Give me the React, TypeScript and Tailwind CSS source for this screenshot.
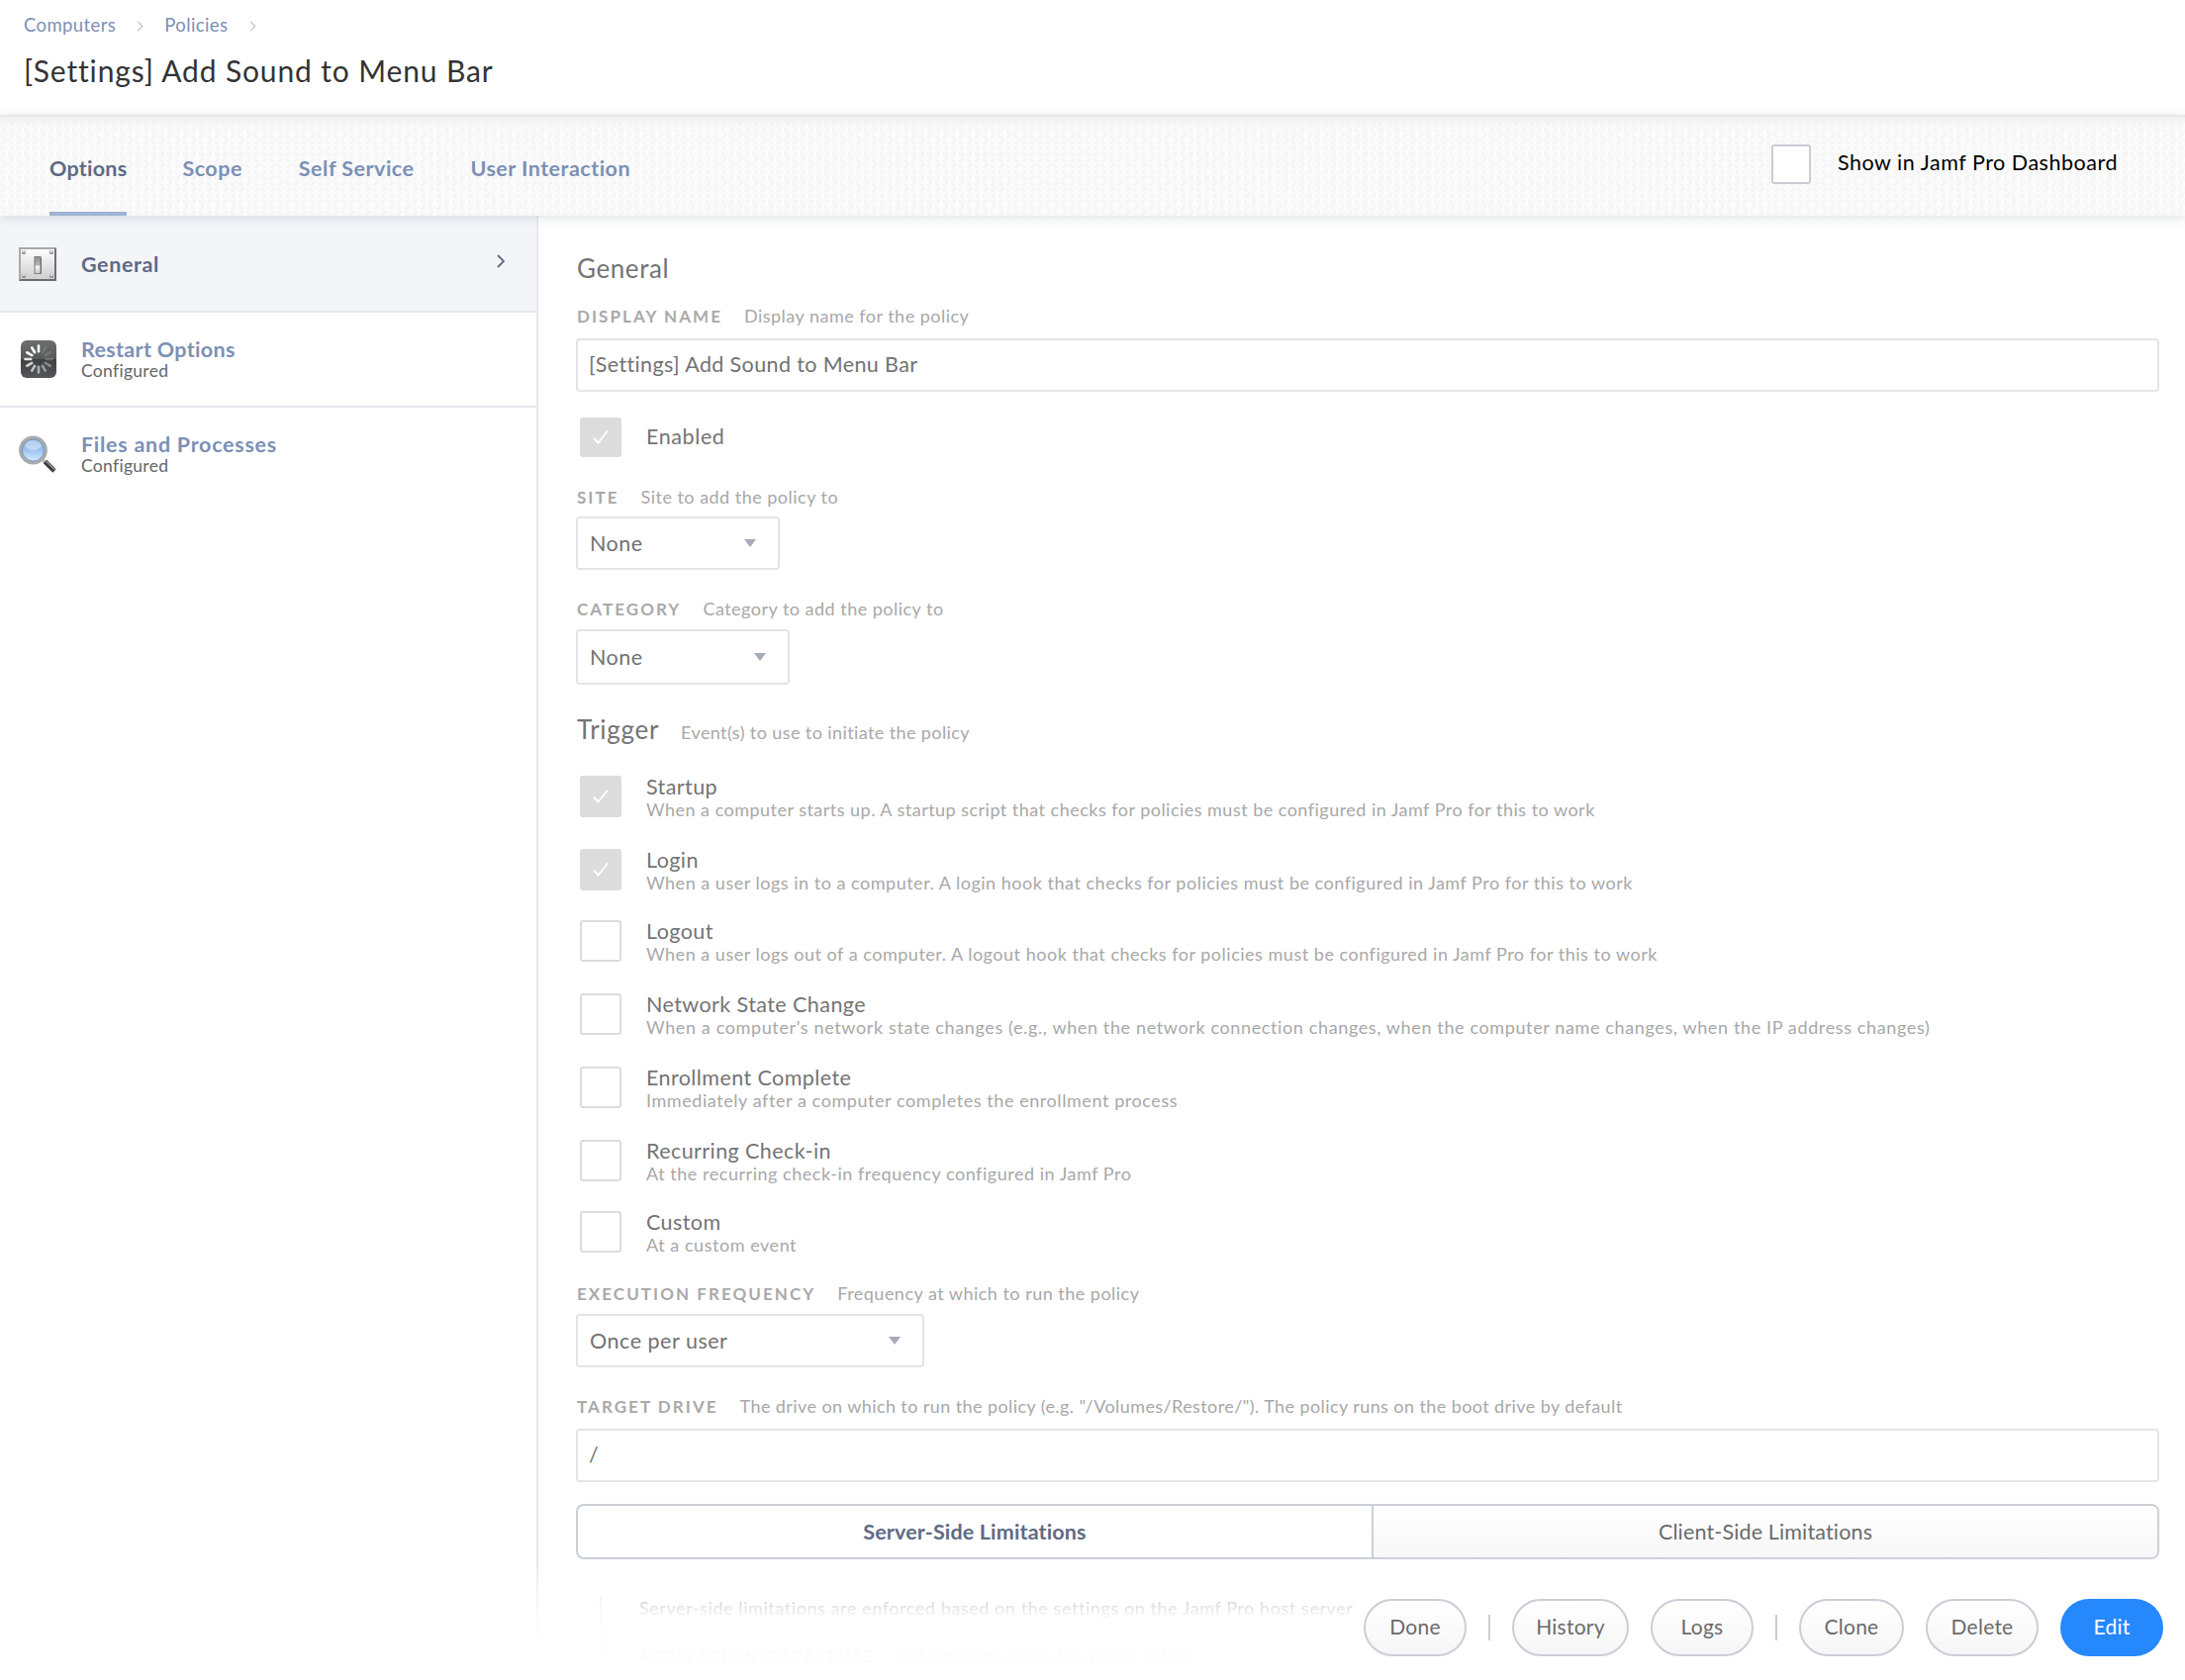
import React from "react";
import clsx from "clsx";

const TABS = ["Scope", "Self Service", "User Interaction"];

const TRIGGERS = [
  {
    name: "Startup",
    note: "When a computer starts up. A startup script that checks for policies must be configured in Jamf Pro for this to work",
    checked: true,
    row: "h-[74px]",
    spacing: "tracking-[0.475px]",
  },
  {
    name: "Login",
    note: "When a user logs in to a computer. A login hook that checks for policies must be configured in Jamf Pro for this to work",
    checked: true,
    row: "h-[72px]",
    spacing: "tracking-[0.51px]",
  },
  {
    name: "Logout",
    note: "When a user logs out of a computer. A logout hook that checks for policies must be configured in Jamf Pro for this to work",
    row: "h-[74px]",
    spacing: "tracking-[0.51px]",
  },
  {
    name: "Network State Change",
    note: "When a computer's network state changes (e.g., when the network connection changes, when the computer name changes, when the IP address changes)",
    row: "h-[74px]",
    spacing: "tracking-[0.625px]",
  },
  {
    name: "Enrollment Complete",
    note: "Immediately after a computer completes the enrollment process",
    row: "h-[74px]",
    spacing: "tracking-[0.57px]",
  },
  {
    name: "Recurring Check-in",
    note: "At the recurring check-in frequency configured in Jamf Pro",
    row: "h-[72px]",
    spacing: "tracking-[0.53px]",
  },
  { name: "Custom", note: "At a custom event", row: "h-[42px]", spacing: "tracking-[0.54px]" },
];

// Spoke opacity, clockwise from twelve o'clock
const SPOKES = [1, 0.12, 0.14, 0.2, 0.35, 0.45, 0.55, 0.65, 0.75, 0.85, 0.95, 1];

const SwitchIcon = () => (
  <svg width="38" height="34" viewBox="0 0 38 34">
    <defs>
      <linearGradient id="plate" x1="0" y1="0" x2="0" y2="1">
        <stop offset="0" stopColor="#fdfdfd" />
        <stop offset="1" stopColor="#cfcfcf" />
      </linearGradient>
      <linearGradient id="lever" x1="0" y1="0" x2="0" y2="1">
        <stop offset="0" stopColor="#8e8e8e" />
        <stop offset="0.5" stopColor="#b5b5b5" />
        <stop offset="0.55" stopColor="#f5f5f5" />
        <stop offset="1" stopColor="#c8c8c8" />
      </linearGradient>
    </defs>
    <rect width="38" height="34" fill="#a9a9a9" />
    <path d="M38 0v34H0l2-2h34V2z" fill="#6e6e6e" />
    <rect x="2" y="2" width="34" height="30" fill="url(#plate)" />
    {[5, 33].map((x) =>
      [5, 29].map((y) => (
        <g key={`${x}-${y}`}>
          <circle cx={x} cy={y} r="1.9" fill="#777" />
          <circle cx={x} cy={y - 0.7} r="1.2" fill="#e2e2e2" />
        </g>
      )),
    )}
    <rect x="16" y="9.5" width="6" height="17" fill="url(#lever)" stroke="#7d7d7d" />
    <path d="M22.5 10.5v16" stroke="#6c6c6c" />
  </svg>
);

const RestartIcon = () => (
  <svg className="ml-0.5" width="36" height="38" viewBox="0 0 36 38">
    <defs>
      <linearGradient id="dark" x1="0" y1="0" x2="0" y2="1">
        <stop offset="0" stopColor="#6c6d6f" />
        <stop offset="0.49" stopColor="#58595b" />
        <stop offset="0.5" stopColor="#3f4042" />
        <stop offset="1" stopColor="#55565a" />
      </linearGradient>
    </defs>
    <rect width="36" height="38" rx="6" fill="url(#dark)" />
    {SPOKES.map((o, i) => (
      <path
        key={i}
        d="M18 11.2V5.5"
        stroke="#fff"
        strokeOpacity={o}
        strokeWidth="2.6"
        strokeLinecap="round"
        transform={`rotate(${i * 30} 18 19)`}
      />
    ))}
  </svg>
);

const MagnifierIcon = () => (
  <svg width="38" height="38" viewBox="0 0 38 38">
    <defs>
      <linearGradient id="glass" x1="0" y1="0" x2="0" y2="1">
        <stop offset="0" stopColor="#7ba6e0" />
        <stop offset="0.5" stopColor="#9cc3f2" />
        <stop offset="1" stopColor="#d9f0fe" />
      </linearGradient>
    </defs>
    <path d="M24 24.5l4 4" stroke="#b5b5b5" strokeWidth="3" />
    <path d="M26.5 26.5l9.5 9.5" stroke="#3f3f3f" strokeWidth="5" />
    <path d="M27.5 26l9 8.8" stroke="#9a9a9a" strokeWidth="1.2" />
    <circle cx="14.5" cy="15" r="12.7" fill="url(#glass)" stroke="#a9abad" strokeWidth="3.4" />
    <circle cx="14.5" cy="15" r="11" fill="none" stroke="#6f8fc0" strokeWidth="0.8" />
    <ellipse cx="14.5" cy="10" rx="8" ry="5" fill="#fff" fillOpacity="0.4" />
  </svg>
);

const Chevron = ({ className }: { className?: string }) => (
  <svg className={className} width="8" height="14" viewBox="0 0 8 14" fill="none">
    <path d="M1 1l6 6-6 6" stroke="currentColor" strokeWidth="1.8" />
  </svg>
);

// Woven texture behind the tab bar
const Weave = () => (
  <svg className="absolute inset-0 h-full w-full">
    <defs>
      <pattern id="weave" width="16" height="12" patternUnits="userSpaceOnUse">
        <rect width="16" height="12" fill="#fafafa" />
        <path d="M1 5l4-4 2 1-4 4zM9 11l4-4 2 1-4 4z" fill="#f4f4f4" />
        <path d="M9 2l4 2-1 2-4-2zM1 8l4 2-1 2-4-2z" fill="#f5f5f5" />
        <path d="M7.5 2v5M15.5 8v4" stroke="#fff" />
      </pattern>
    </defs>
    <rect width="100%" height="100%" fill="url(#weave)" />
  </svg>
);

const CheckBox = ({ checked }: { checked?: boolean }) => (
  <div
    className={clsx(
      "flex h-full max-h-[42px] w-[42px] shrink-0 items-center justify-center rounded-[3px]",
      checked ? "bg-[#dcdcdc]" : "border-2 border-[#dcdcdc] bg-white",
    )}
  >
    {checked && (
      <svg width="16" height="16" viewBox="0 0 16 16" fill="none">
        <path d="M1 8.5l4.5 5L15 1.5" stroke="#fff" strokeWidth="1.9" />
      </svg>
    )}
  </div>
);

const FieldLabel = ({
  name,
  note,
  spacing = "tracking-[0.48px]",
}: {
  name: string;
  note: string;
  spacing?: string;
}) => (
  <div className="-ml-px flex h-6 items-baseline leading-6 whitespace-nowrap">
    <span className="text-[17px] font-bold tracking-[2.05px] text-[#a9a9a9]">{name}</span>
    <span className={clsx("ml-[22px] text-[18px] text-[#a8a8a8]", spacing)}>{note}</span>
  </div>
);

const TextField = ({ value }: { value: string }) => (
  <div className="-ml-0.5 flex h-[54px] w-[1600px] items-center rounded-[4px] border-2 border-[#e3e4e7] bg-white pb-0.5 pl-[11px] text-[21.5px] tracking-[0.38px] text-[#727272]">
    {value}
  </div>
);

const Select = ({ value, className }: { value: string; className: string }) => (
  <div
    className={clsx(
      "-ml-0.5 flex items-center justify-between rounded-[4px] border-2 border-[#e3e4e7] bg-white pr-[22px] pl-3 text-[21.5px] tracking-[0.52px] text-[#727272]",
      className,
    )}
  >
    <span>{value}</span>
    <svg width="12" height="8" viewBox="0 0 12 8">
      <path d="M0 0h12L6 8z" fill="#a6abb9" />
    </svg>
  </div>
);

const SideItem = ({
  icon,
  name,
  note,
  spacing,
}: {
  icon: React.ReactNode;
  name: string;
  note: string;
  spacing: string;
}) => (
  <div className="flex h-[94px] items-start pt-[27px] pl-[19px]">
    <div className="flex h-10 w-[63px] items-center">{icon}</div>
    <div className="-mt-0.5 whitespace-nowrap">
      <div className={clsx("text-[21.5px] leading-6 font-bold text-[#7c90b5]", spacing)}>{name}</div>
      <div className="text-[17.5px] leading-[19px] tracking-[0.3px] text-[#666]">{note}</div>
    </div>
  </div>
);

const PillButton = ({ children, className }: { children: string; className: string }) => (
  <button
    className={clsx(
      "flex h-[58px] items-center justify-center rounded-full pb-0.5 text-[21px] tracking-[0.25px]",
      className,
    )}
  >
    {children}
  </button>
);

const PILL = "border-2 border-[#cbced6] bg-gradient-to-b from-white to-[#f6f6f7] text-[#6b6b6b]";

const App: React.FC = () => (
  <div
    className="relative flex h-[1698px] w-[2208px] flex-col overflow-hidden bg-white"
    style={{ fontFamily: 'Lato, "Liberation Sans", sans-serif' }}
  >
    {/* Header */}
    <header className="h-[116px] shrink-0 pt-[14px] pl-6">
      <nav className="flex h-6 items-center text-[18.5px] tracking-[0.4px] text-[#7c90b5]">
        <span>Computers</span>
        <Chevron className="ml-[21px] h-[11px] w-[7px] text-[#c4c8d0]" />
        <span className="ml-[21px]">Policies</span>
        <Chevron className="ml-[22px] h-[11px] w-[7px] text-[#c4c8d0]" />
      </nav>
      <h1 className="mt-[13px] text-[30px] leading-10 tracking-[0.86px] text-[#333]">
        [Settings] Add Sound to Menu Bar
      </h1>
    </header>

    {/* Tab bar */}
    <div className="relative z-10 h-[102px] shrink-0 shadow-[0_2px_10px_rgba(60,70,90,0.16)]">
      <Weave />
      <div className="absolute inset-x-0 top-0 h-3 border-t-2 border-[#e7e7e7] bg-gradient-to-b from-[#f0f0f0] to-transparent" />
      <div className="relative flex h-full justify-between">
        <div className="flex gap-[57px] pl-[50px] text-[21.5px] leading-[30px] font-bold tracking-[0.48px] text-[#7c90b5]">
          <div className="-mr-px h-full border-b-4 border-[#9fb5d6] pt-[39px] tracking-[0.26px] text-[#5f6a85]">
            Options
          </div>
          {TABS.map((t) => (
            <div key={t} className="pt-[39px]">
              {t}
            </div>
          ))}
        </div>
        <div className="flex items-start pt-[30px] pr-[68px]">
          <div className="h-10 w-10 rounded-[3px] border-2 border-[#c9ccd4] bg-white" />
          <span className="ml-[27px] pt-[3px] text-[21.5px] leading-[30px] tracking-[0.53px] text-black">
            Show in Jamf Pro Dashboard
          </span>
        </div>
      </div>
    </div>

    <div className="flex flex-1">
      {/* Payload list */}
      <aside className="w-[544px] shrink-0 border-r-2 border-[#e8e9ee]">
        <div className="flex h-[98px] items-start border-b-2 border-[#e8e9ef] bg-[#f4f5f9] pt-[32px] pr-8 pl-[19px]">
          <div className="w-[63px]">
            <SwitchIcon />
          </div>
          <div className="flex-1 text-[21.5px] leading-[34px] font-bold tracking-[0.6px] text-[#5f6a85]">
            General
          </div>
          <Chevron className="mt-[7px] text-[#5f6a85]" />
        </div>
        <div className="border-b-2 border-[#e8e9ef]">
          <SideItem
            icon={<RestartIcon />}
            name="Restart Options"
            note="Configured"
            spacing="tracking-[0.33px]"
          />
        </div>
        <SideItem
          icon={<MagnifierIcon />}
          name="Files and Processes"
          note="Configured"
          spacing="tracking-[0.72px]"
        />
      </aside>

      <main className="flex-1 pl-10">
        <h2 className="mt-[38px] -ml-px text-[26px] leading-[30px] tracking-[0.6px] text-[#747474]">
          General
        </h2>

        <div className="mt-[21px]">
          <FieldLabel name="DISPLAY NAME" note="Display name for the policy" />
        </div>
        <div className="mt-[11px]">
          <TextField value="[Settings] Add Sound to Menu Bar" />
        </div>

        <div className="mt-[26px] ml-0.5 flex h-10 items-center">
          <CheckBox checked />
          <span className="ml-[25px] pb-0.5 text-[21.5px] tracking-[0.6px] text-[#747474]">Enabled</span>
        </div>

        <div className="mt-7">
          <FieldLabel name="SITE" note="Site to add the policy to" />
        </div>
        <div className="mt-2">
          <Select value="None" className="h-[54px] w-[206px]" />
        </div>

        <div className="mt-[27px]">
          <FieldLabel name="CATEGORY" note="Category to add the policy to" />
        </div>
        <div className="mt-[9px]">
          <Select value="None" className="h-14 w-[216px]" />
        </div>

        <div className="mt-[30px] -ml-px flex h-[30px] items-baseline leading-[30px]">
          <h2 className="text-[26px] tracking-[0.7px] text-[#747474]">Trigger</h2>
          <span className="ml-[22px] text-[18px] tracking-[0.4px] text-[#a8a8a8]">
            Event(s) to use to initiate the policy
          </span>
        </div>

        <div className="mt-[32px] ml-0.5">
          {TRIGGERS.map((t) => (
            <div key={t.name} className={clsx("flex", t.row)}>
              <CheckBox checked={t.checked} />
              <div className="ml-[25px] whitespace-nowrap">
                <div className="text-[21.5px] leading-[22px] tracking-[0.42px] text-[#747474]">{t.name}</div>
                <div className={clsx("text-[18px] leading-6 text-[#a8a8a8]", t.spacing)}>{t.note}</div>
              </div>
            </div>
          ))}
        </div>

        <div className="mt-[29px]">
          <FieldLabel name="EXECUTION FREQUENCY" note="Frequency at which to run the policy" />
        </div>
        <div className="mt-[9px]">
          <Select value="Once per user" className="h-[54px] w-[352px]" />
        </div>

        <div className="mt-[27px]">
          <FieldLabel
            name="TARGET DRIVE"
            note={'The drive on which to run the policy (e.g. "/Volumes/Restore/"). The policy runs on the boot drive by default'}
            spacing="tracking-[0.41px]"
          />
        </div>
        <div className="mt-[11px]">
          <TextField value="/" />
        </div>

        <div className="mt-[22px] -ml-0.5 flex h-14 w-[1600px] overflow-hidden rounded-[8px] border-2 border-[#cbd0d6] text-[21.5px] tracking-[0.15px]">
          <div className="flex w-[804px] items-center justify-center border-r-2 border-[#cbd0d6] font-bold text-[#5f6a85]">
            Server-Side Limitations
          </div>
          <div className="flex flex-1 items-center justify-center bg-gradient-to-b from-white to-[#f7f7f8] text-[#6b6b6b]">
            Client-Side Limitations
          </div>
        </div>

        <div className="mt-[37px] ml-[22px] border-l-2 border-[#e3e4e7] pl-[38px]">
          <div className="text-[18px] leading-6 tracking-[0.57px] text-[#8a8a8a]">
            Server-side limitations are enforced based on the settings on the Jamf Pro host server
          </div>
          <div className="mt-[24px]">
            <FieldLabel name="ACTIVATION DATE/TIME" note="Date/time to make the policy active" />
          </div>
        </div>
      </main>
    </div>

    {/* Action bar, page content fades out beneath it */}
    <footer className="absolute inset-x-0 bottom-0 flex h-[118px] items-start justify-end gap-[22px] bg-gradient-to-b from-white/0 via-white/90 via-45% to-white pt-9 pr-[22px]">
      <PillButton className={clsx(PILL, "w-[104px]")}>Done</PillButton>
      <div className="mt-4 h-[26px] w-0.5 bg-[#cbced6]" />
      <PillButton className={clsx(PILL, "w-[118px]")}>History</PillButton>
      <PillButton className={clsx(PILL, "w-[104px]")}>Logs</PillButton>
      <div className="mt-4 h-[26px] w-0.5 bg-[#cbced6]" />
      <PillButton className={clsx(PILL, "w-[106px]")}>Clone</PillButton>
      <PillButton className={clsx(PILL, "w-[114px]")}>Delete</PillButton>
      <PillButton className="w-[104px] bg-[#2588fd] text-white">Edit</PillButton>
    </footer>
  </div>
);

export default App;
